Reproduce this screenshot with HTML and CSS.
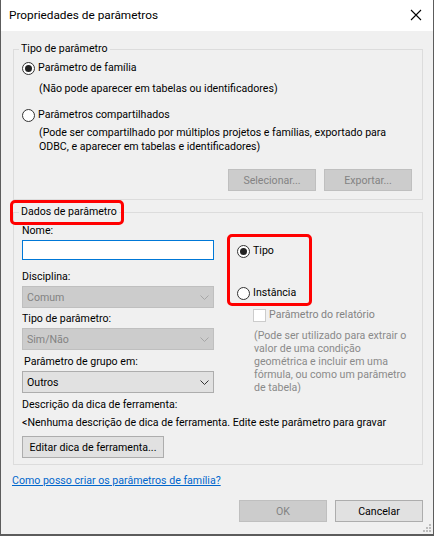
FILE: index.html
```html
<!DOCTYPE html>
<html>
    <head>
        <title>Propriedades de parâmetros</title>
        <link rel="stylesheet" href="styles.css">
    </head>
    <body>
        <div class="window">
            <div class="titlebar">
                <span class="title">Propriedades de parâmetros</span>
                <svg class="close" width="12" height="12" viewBox="0 0 12 12">
                    <path d="M1 1 L11 11 M11 1 L1 11" stroke="#000" stroke-width="1.1" fill="none"/>
                </svg>
            </div>
            <div class="content">
                <fieldset class="group group-type">
                    <legend>Tipo de parâmetro</legend>
                    <div class="radio-row first">
                        <span class="radio checked"></span>
                        <span>Parâmetro de família</span>
                    </div>
                    <div class="note">(Não pode aparecer em tabelas ou identificadores)</div>
                    <div class="radio-row shared">
                        <span class="radio"></span>
                        <span>Parâmetros compartilhados</span>
                    </div>
                    <div class="note multi">(Pode ser compartilhado por múltiplos projetos e famílias, exportado para<br>ODBC, e aparecer em tabelas e identificadores)</div>
                    <div class="group-buttons">
                        <button class="btn disabled">Selecionar...</button>
                        <button class="btn disabled">Exportar...</button>
                    </div>
                </fieldset>

                <fieldset class="group group-data">
                    <legend class="marked">Dados de parâmetro</legend>
                    <div class="columns">
                        <div class="col-left">
                            <div class="label first">Nome:</div>
                            <div class="textbox"></div>
                            <div class="label l-disc">Disciplina:</div>
                            <div class="select disabled"><span>Comum</span><svg class="chev" width="9" height="5" viewBox="0 0 9 5"><path d="M0.5 0.5 L4.5 4.5 L8.5 0.5" stroke="#a6a6a6" fill="none"/></svg></div>
                            <div class="label l-type">Tipo de parâmetro:</div>
                            <div class="select disabled"><span>Sim/Não</span><svg class="chev" width="9" height="5" viewBox="0 0 9 5"><path d="M0.5 0.5 L4.5 4.5 L8.5 0.5" stroke="#a6a6a6" fill="none"/></svg></div>
                            <div class="label l-group">Parâmetro de grupo em:</div>
                            <div class="select"><span>Outros</span><svg class="chev" width="9" height="5" viewBox="0 0 9 5"><path d="M0.5 0.5 L4.5 4.5 L8.5 0.5" stroke="#333" fill="none"/></svg></div>
                        </div>
                        <div class="col-right">
                            <div class="scope marked-box">
                                <div class="radio-row tipo">
                                    <span class="radio checked"></span>
                                    <span>Tipo</span>
                                </div>
                                <div class="radio-row instancia">
                                    <span class="radio"></span>
                                    <span>Instância</span>
                                </div>
                            </div>
                            <div class="check-row">
                                <span class="checkbox"></span>
                                <span>Parâmetro do relatório</span>
                            </div>
                            <div class="report-note">(Pode ser utilizado para extrair o<br>valor de uma condição<br>geométrica e incluir em uma<br>fórmula, ou como um parâmetro<br>de tabela)</div>
                        </div>
                    </div>
                    <div class="label l-desc">Descrição da dica de ferramenta:</div>
                    <div class="tooltip-text">&lt;Nenhuma descrição de dica de ferramenta. Edite este parâmetro para gravar</div>
                    <button class="btn btn-edit">Editar dica de ferramenta...</button>
                </fieldset>

                <a class="help" href="#">Como posso criar os parâmetros de família?</a>

                <div class="footer">
                    <button class="btn disabled">OK</button>
                    <button class="btn">Cancelar</button>
                </div>
            </div>
            <svg class="grip" width="8" height="8" viewBox="0 0 8 8">
                <rect x="6" y="0" width="2" height="2" fill="#bcbcbc"/>
                <rect x="3" y="3" width="2" height="2" fill="#bcbcbc"/>
                <rect x="6" y="3" width="2" height="2" fill="#bcbcbc"/>
                <rect x="0" y="6" width="2" height="2" fill="#bcbcbc"/>
                <rect x="3" y="6" width="2" height="2" fill="#bcbcbc"/>
                <rect x="6" y="6" width="2" height="2" fill="#bcbcbc"/>
            </svg>
        </div>
    </body>
</html>
```

FILE: styles.css
```css
* {
    box-sizing: border-box;
}

body {
    margin: 0;
    font-family: Roboto, 'Noto Sans', Arial, sans-serif;
    font-size: 10.6px;
    color: #000;
    white-space: nowrap;
}

.window {
    position: relative;
    width: 434px;
    height: 536px;
    background: #f0f0f0;
    border: 1px solid #5c5c5c;
    border-top: 0;
    border-bottom-width: 2px;
    overflow: hidden;
}

.titlebar {
    height: 31px;
    background: #fff;
    display: flex;
    align-items: center;
    justify-content: space-between;
    padding: 0 11px 1px 8px;
}

.title {
    font-size: 11.8px;
}

.content {
    padding: 10px 0 0 12px;
}

.group {
    width: 410px;
    margin: 0;
    padding: 0 0 0 8px;
    border: 1px solid #dcdcdc;
    min-width: 0;
}

.group legend {
    margin-left: -3px;
    padding: 0 2px;
    height: 16px;
    line-height: 16px;
}

.radio-row, .check-row {
    display: flex;
    align-items: center;
    height: 16px;
    line-height: 16px;
}

.radio {
    width: 13px;
    height: 13px;
    border: 1px solid #333;
    border-radius: 50%;
    background: #fff;
    margin-right: 3px;
    display: flex;
    align-items: center;
    justify-content: center;
    flex: none;
}

.radio.checked::after {
    content: "";
    width: 7px;
    height: 7px;
    border-radius: 50%;
    background: #222;
}

.group-type .first {
    margin-top: 3px;
}

.note {
    margin: 5px 0 0 17px;
    line-height: 16px;
}

.group-type .shared {
    margin-top: 10px;
}

.note.multi {
    margin-top: 3px;
    line-height: 14px;
}

.group-buttons {
    display: flex;
    justify-content: flex-end;
    gap: 8px;
    margin: 15px 10px 8px 0;
}

.btn {
    width: 88px;
    height: 22px;
    border: 1px solid #adadad;
    background: #e1e1e1;
    font-family: inherit;
    font-size: 10.6px;
    color: #000;
    padding: 0;
}

.btn.disabled {
    background: #cccccc;
    border-color: #bfbfbf;
    color: #838383;
}

.group-data {
    margin-top: 4px;
}

.marked {
    position: relative;
}

.marked::after {
    content: "";
    position: absolute;
    left: -9px;
    right: -5px;
    top: -4px;
    bottom: -5px;
    border: 3px solid #f00;
    border-radius: 5px;
}

.columns {
    display: flex;
}

.col-left {
    width: 192px;
    display: flex;
    flex-direction: column;
}

.label {
    height: 16px;
    line-height: 16px;
}

.label.first {
    margin-top: 3px;
}

.textbox {
    height: 20px;
    margin-top: 1px;
    background: #fff;
    border: 1px solid #0078d7;
}

.select {
    height: 22px;
    margin-top: 1px;
    border: 1px solid #adadad;
    background: #e1e1e1;
    display: flex;
    align-items: center;
    justify-content: space-between;
    padding: 0 4px 0 4px;
}

.select.disabled {
    background: #cccccc;
    border-color: #bfbfbf;
    color: #838383;
}

.chev {
    margin-top: 1px;
}

.l-disc {
    margin-top: 9px;
}

.l-type {
    margin-top: 3px;
}

.l-group {
    margin-top: 4px;
    margin-left: 2px;
}

.col-right {
    margin-left: 13px;
}

.scope {
    position: relative;
    width: 85px;
    height: 72px;
    margin-top: 14px;
    padding: 9px 0 0 10px;
}

.marked-box::after {
    content: "";
    position: absolute;
    inset: 0;
    border: 3px solid #f00;
    border-radius: 5px;
}

.scope .instancia {
    margin-top: 26px;
}

.check-row {
    margin: 1px 0 0 26px;
    color: #838383;
}

.checkbox {
    width: 13px;
    height: 13px;
    border: 1px solid #cccccc;
    background: #fff;
    margin-right: 3px;
}

.report-note {
    margin: 6px 0 0 27px;
    line-height: 13px;
    color: #8a8a8a;
}

.l-desc {
    margin-top: 3px;
}

.tooltip-text {
    margin-top: 2px;
    height: 16px;
    line-height: 16px;
}

.btn-edit {
    width: 142px;
    margin: 5px 0 6px 0;
}

.help {
    display: block;
    margin-top: 8px;
    height: 16px;
    line-height: 16px;
    color: #0066cc;
    width: max-content;
    margin-left: -1px;
}

.footer {
    display: flex;
    justify-content: flex-end;
    gap: 8px;
    width: 410px;
    margin-top: 11px;
}

.grip {
    position: absolute;
    right: 2px;
    bottom: 2px;
}
```
